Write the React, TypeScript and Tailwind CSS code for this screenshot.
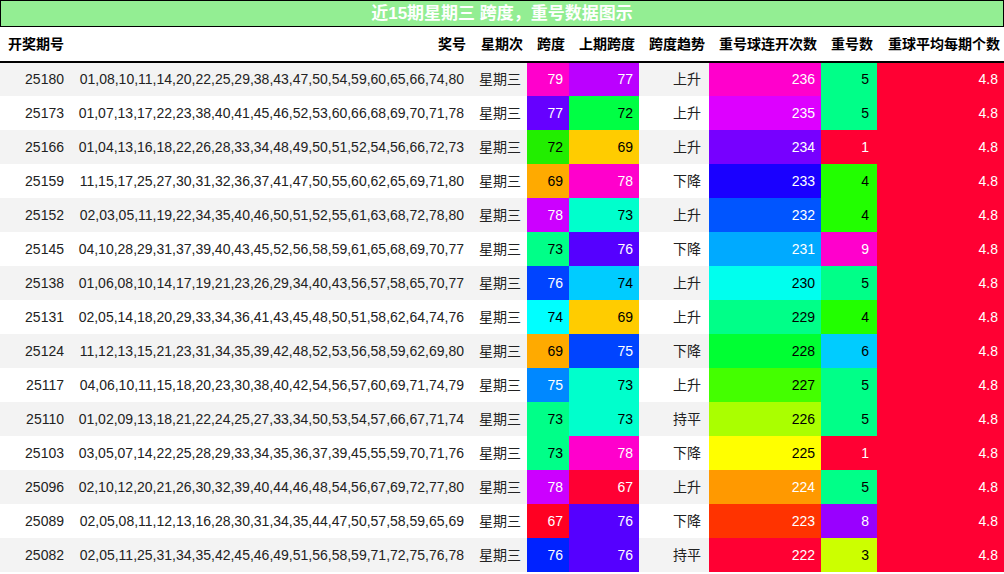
const rows: [string,string,number,string,number,string,string,number,string,number,string][] = [
["25180","01,08,10,11,14,20,22,25,29,38,43,47,50,54,59,60,65,66,74,80",79,"#ff00cc",77,"#bb00ff","上升",236,"#ff00cc",5,"#00ff88"],
["25173","01,07,13,17,22,23,38,40,41,45,46,52,53,60,66,68,69,70,71,78",77,"#6600ff",72,"#00ff44","上升",235,"#dd00ff",5,"#00ff88"],
["25166","01,04,13,16,18,22,26,28,33,34,48,49,50,51,52,54,56,66,72,73",72,"#22ee00",69,"#ffcc00","上升",234,"#7700ff",1,"#ff0033"],
["25159","11,15,17,25,27,30,31,32,36,37,41,47,50,55,60,62,65,69,71,80",69,"#ffaa00",78,"#ff00cc","下降",233,"#1a00ff",4,"#22ff00"],
["25152","02,03,05,11,19,22,34,35,40,46,50,51,52,55,61,63,68,72,78,80",78,"#cc00ff",73,"#00ffcc","上升",232,"#0055ff",4,"#22ff00"],
["25145","04,10,28,29,31,37,39,40,43,45,52,56,58,59,61,65,68,69,70,77",73,"#00ff88",76,"#5500ff","下降",231,"#00aaff",9,"#ff00cc"],
["25138","01,06,08,10,14,17,19,21,23,26,29,34,40,43,56,57,58,65,70,77",76,"#0044ff",74,"#00ccff","上升",230,"#00ffee",5,"#00ff88"],
["25131","02,05,14,18,20,29,33,34,36,41,43,45,48,50,51,58,62,64,74,76",74,"#00ffff",69,"#ffcc00","上升",229,"#00ff88",4,"#22ff00"],
["25124","11,12,13,15,21,23,31,34,35,39,42,48,52,53,56,58,59,62,69,80",69,"#ffaa00",75,"#0044ff","下降",228,"#00ff33",6,"#00ccff"],
["25117","04,06,10,11,15,18,20,23,30,38,40,42,54,56,57,60,69,71,74,79",75,"#0088ff",73,"#00ffcc","上升",227,"#44ff00",5,"#00ff88"],
["25110","01,02,09,13,18,21,22,24,25,27,33,34,50,53,54,57,66,67,71,74",73,"#00ff88",73,"#00ffcc","持平",226,"#aaff00",5,"#00ff88"],
["25103","03,05,07,14,22,25,28,29,33,34,35,36,37,39,45,55,59,70,71,76",73,"#00ff88",78,"#ff00cc","下降",225,"#ffff00",1,"#ff0033"],
["25096","02,10,12,20,21,26,30,32,39,40,44,46,48,54,56,67,69,72,77,80",78,"#cc00ff",67,"#ff0033","上升",224,"#ff9900",5,"#00ff88"],
["25089","02,05,08,11,12,13,16,28,30,31,34,35,44,47,50,57,58,59,65,69",67,"#ff0022",76,"#5500ff","下降",223,"#ff3300",8,"#9900ff"],
["25082","02,05,11,25,31,34,35,42,45,46,49,51,56,58,59,71,72,75,76,78",76,"#0022ff",76,"#5500ff","持平",222,"#ff0033",3,"#ccff00"],
];
const light = new Set(["#22ee00","#ffaa00","#00ff88","#00ffff","#00ff44","#ffcc00","#00ffcc","#00ccff","#00ffee","#00ff33","#44ff00","#aaff00","#ffff00","#22ff00","#ccff00"]);
const tc = (c: string) => (light.has(c) ? "#000" : "#fff");
export default function App() {
  return (
    <div className="w-[1004px] h-[574px] bg-white overflow-hidden text-[14px]" style={{ fontFamily: '"Liberation Sans","Noto Sans CJK SC",sans-serif' }}>
      <div className="h-[27px] bg-[#93ee93] border border-black flex items-center justify-center text-white font-bold text-[17px]">近15期星期三 跨度，重号数据图示</div>
      <table className="border-collapse w-[1004px] table-fixed">
        <colgroup>
          <col className="w-[72px]" /><col className="w-[398px]" /><col className="w-[57px]" /><col className="w-[42px]" /><col className="w-[70px]" /><col className="w-[70px]" /><col className="w-[112px]" /><col className="w-[56px]" /><col className="w-[127px]" />
        </colgroup>
        <thead>
          <tr className="h-[35px] border-b-2 border-black font-bold">
            <th className="text-left pl-2">开奖期号</th>
            <th className="text-right pr-1">奖号</th>
            <th className="text-right pr-1">星期次</th>
            <th className="text-right pr-1">跨度</th>
            <th className="text-right pr-1">上期跨度</th>
            <th className="text-right pr-1">跨度趋势</th>
            <th className="text-right pr-1">重号球连开次数</th>
            <th className="text-right pr-1">重号数</th>
            <th className="text-right pr-1">重球平均每期个数</th>
          </tr>
        </thead>
        <tbody>
          {rows.map((r, i) => (
            <tr key={r[0]} className={"h-[34px] " + (i % 2 === 0 ? "bg-[#f3f3f3]" : "bg-white")}>
              <td className="text-right pr-[8px] text-[#222]">{r[0]}</td>
              <td className="text-right pr-[6px] text-[#222] whitespace-nowrap">{r[1]}</td>
              <td className="text-right pr-[6px] text-[#222]">星期三</td>
              <td className="text-right pr-[6px]" style={{ background: r[3], color: tc(r[3]) }}>{r[2]}</td>
              <td className="text-right pr-[6px]" style={{ background: r[5], color: tc(r[5]) }}>{r[4]}</td>
              <td className="text-right pr-[8px] text-[#222]">{r[6]}</td>
              <td className="text-right pr-[6px]" style={{ background: r[8], color: tc(r[8]) }}>{r[7]}</td>
              <td className="text-right pr-[8px]" style={{ background: r[10], color: tc(r[10]) }}>{r[9]}</td>
              <td className="text-right pr-[6px] bg-[#ff0033] text-white">4.8</td>
            </tr>
          ))}
        </tbody>
      </table>
    </div>
  );
}
